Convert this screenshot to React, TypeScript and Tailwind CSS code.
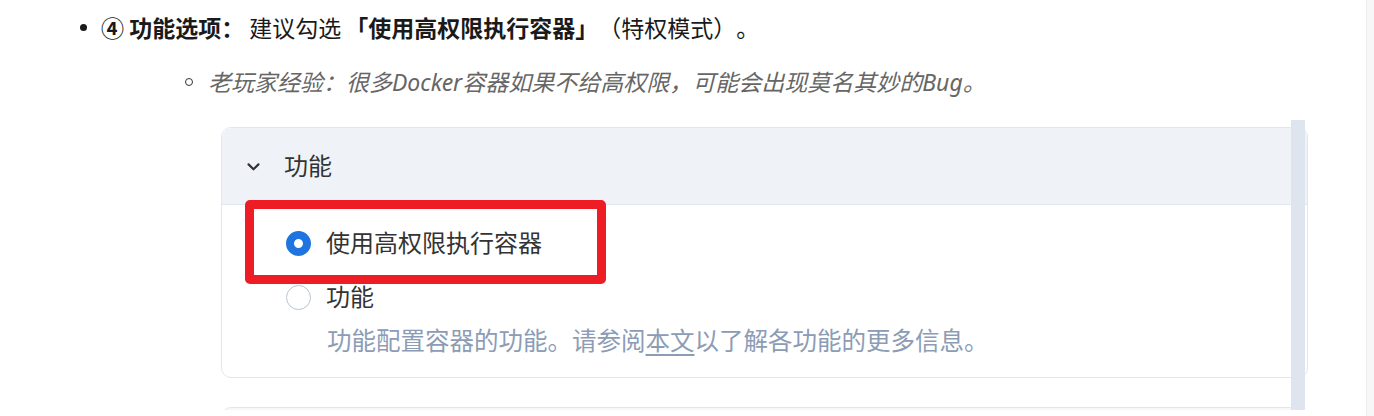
import React from 'react';

const latin = { fontFamily: '"Noto Sans", "Noto Sans CJK SC", sans-serif' };
const cjkFirst = { fontFamily: '"Noto Sans CJK SC", "Noto Sans", sans-serif' };

function Radio({ checked }: { checked?: boolean }) {
  if (checked) {
    return <span className="w-[25px] h-[25px] rounded-full border-[8px] border-[#1f74e0] bg-white shrink-0" />;
  }
  return <span className="w-[25px] h-[25px] rounded-full border-[1.5px] border-[#b9c4d4] bg-white shrink-0" />;
}

function Screenshot() {
  return (
    <div className="relative ml-[220px] mt-[22px] w-[1090px] h-[291px] overflow-hidden bg-white">
      <div className="ml-[1px] mt-[8px] w-[1087px] rounded-[10px] border border-[#e2e7ef] bg-white">
        <div className="h-[77px] flex items-center pl-[23px] bg-[#eff2f7] rounded-t-[10px] border-b border-[#e2e7ef]">
          <svg width="17" height="17" viewBox="0 0 24 24" fill="none" stroke="#333" strokeWidth="3" strokeLinecap="round" strokeLinejoin="round">
            <path d="M5 9l7 7 7-7" />
          </svg>
          <span className="ml-[22px] text-[24px] text-[#333]">功能</span>
        </div>
        <div className="pl-[64px] pt-[22px] pb-[19px] text-[#333]">
          <div className="flex items-center gap-[15px] h-[32px]">
            <Radio checked />
            <span className="text-[24px]">使用高权限执行容器</span>
          </div>
          <div className="flex items-center gap-[15px] h-[32px] mt-[22px]">
            <Radio />
            <span className="text-[24px]">功能</span>
          </div>
          <div className="ml-[41px] mt-[11px] text-[24.5px] text-[#8c9cb5] leading-[34px]">
            功能配置容器的功能。请参阅<span className="underline underline-offset-4">本文</span>以了解各功能的更多信息。
          </div>
        </div>
      </div>
      <div className="ml-[1px] mt-[29px] w-[1087px] h-[40px] rounded-t-[10px] border border-[#e2e7ef] bg-[#f6f8fb]" />
      <div className="absolute left-[1071px] top-[1px] w-[14px] h-[290px] bg-[#dfe5ee]" />
      {/* red highlight box */}
      <div className="absolute left-[25px] top-[81px] w-[361px] h-[84px] border-[9px] border-[#ee1c25] rounded-[5px]" />
    </div>
  );
}

export default function App() {
  return (
    <div className="w-[1374px] h-[416px] bg-white flex overflow-hidden" style={latin}>
      <div className="flex-1">
        <div
          className="flex items-center h-[30px] mt-[12px] pl-[80px] text-[23px] text-[#1a1a1a] [text-spacing-trim:space-all]"
          style={cjkFirst}
        >
          <span className="w-[7px] h-[7px] rounded-full bg-[#1a1a1a] mr-[14px]" />
          <span className="whitespace-pre">
            <span className="font-bold">④ 功能选项：</span>
            <span className="ml-[5px]">建议勾选</span>
            <span className="ml-[4px] font-bold">「使用高权限执行容器」</span>
            <span>（特权模式）。</span>
          </span>
        </div>
        <div className="flex items-center h-[30px] mt-[25px] pl-[185px] text-[23px] text-[#666] italic">
          <span className="w-[8px] h-[8px] rounded-full border border-[#333] mr-[15px]" />
          <span>老玩家经验：很多Docker容器如果不给高权限，可能会出现莫名其妙的Bug。</span>
        </div>
        <Screenshot />
      </div>
      <div className="w-[8px] h-full bg-[#f7f7f7] border-l border-[#ececec]" />
    </div>
  );
}
